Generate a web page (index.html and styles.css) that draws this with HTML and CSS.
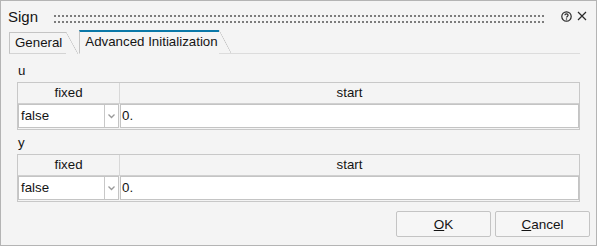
FILE: index.html
```html
<!DOCTYPE html>
<html lang="en">
<head>
    <meta charset="UTF-8">
    <title>Sign</title>
    <link rel="stylesheet" href="styles.css">
</head>
<body>
    <div class="dialog">
        <div class="titlebar">
            <span class="title">Sign</span>
            <span class="grip"></span>
            <svg class="icon" width="11" height="11" viewBox="0 0 11 11">
                <circle cx="5.5" cy="5.5" r="4.7" fill="none" stroke="#2a2a2a" stroke-width="1.2"/>
                <path d="M3.9 4.3 C3.9 2.5 7.1 2.5 7.1 4.3 C7.1 5.4 5.5 5.4 5.5 6.6" fill="none" stroke="#2a2a2a" stroke-width="1.2"/>
                <rect x="4.9" y="7.4" width="1.2" height="1.2" fill="#2a2a2a"/>
            </svg>
            <svg class="icon" width="10" height="10" viewBox="0 0 10 10">
                <path d="M1 1 L9 9 M9 1 L1 9" stroke="#2a2a2a" stroke-width="1.2"/>
            </svg>
        </div>

        <div class="tabs">
            <div class="tab">General</div>
            <div class="tab active">Advanced Initialization</div>
            <div class="tab-rest"></div>
        </div>

        <div class="content">
            <div class="label">u</div>
            <div class="grid">
                <div class="head">fixed</div>
                <div class="head">start</div>
                <div class="select">
                    <span class="value">false</span>
                    <span class="arrow">
                        <svg width="7" height="5" viewBox="0 0 7 5"><path d="M0.5 0.5 L3.5 3.5 L6.5 0.5" fill="none" stroke="#9a9a9a" stroke-width="1.3"/></svg>
                    </span>
                </div>
                <div class="input">0.</div>
            </div>

            <div class="label">y</div>
            <div class="grid">
                <div class="head">fixed</div>
                <div class="head">start</div>
                <div class="select">
                    <span class="value">false</span>
                    <span class="arrow">
                        <svg width="7" height="5" viewBox="0 0 7 5"><path d="M0.5 0.5 L3.5 3.5 L6.5 0.5" fill="none" stroke="#9a9a9a" stroke-width="1.3"/></svg>
                    </span>
                </div>
                <div class="input">0.</div>
            </div>
        </div>

        <div class="buttons">
            <button><u>O</u>K</button>
            <button><u>C</u>ancel</button>
        </div>
    </div>
</body>
</html>
```

FILE: styles.css
```css
body {
    margin: 0;
    font-family: "Liberation Sans", Arial, sans-serif;
    font-size: 13.3px;
    color: #141414;
    background: #f4f4f4;
}

.dialog {
    width: 597px;
    height: 246px;
    box-sizing: border-box;
    border: 1px solid #b4b4b4;
    background: #f4f4f4;
    display: flex;
    flex-direction: column;
}

.titlebar {
    height: 30px;
    display: flex;
    align-items: center;
    padding: 0 9px 0 7px;
}

.title {
    font-size: 15px;
    margin-right: 14px;
}

.grip {
    flex: 1;
    align-self: flex-start;
    height: 8px;
    margin: 14px 12px 0 0;
    background-image: conic-gradient(from 90deg at 2px 2px, transparent 75%, #7c7c7c 0);
    background-size: 4px 6px;
}

.icon {
    margin-left: 5px;
}

.tabs {
    display: flex;
    align-items: flex-end;
    height: 23px;
    padding-left: 8px;
}

.tab {
    position: relative;
    height: 20px;
    line-height: 20px;
    padding: 0 4px 0 5px;
    border-left: 1px solid #c4c4c4;
    border-top: 1px solid #c4c4c4;
    border-bottom: 1px solid #d4d4d4;
    margin-right: 13px;
}

.tab::after {
    content: "";
    position: absolute;
    top: -1px;
    right: -12px;
    width: 12px;
    height: 22px;
    background: linear-gradient(to top right, transparent calc(50% - 0.6px), #c4c4c4 50%, transparent calc(50% + 0.6px));
}

.tab.active {
    height: 21px;
    border-top: 2px solid #0a78a8;
    border-bottom-color: transparent;
    padding-right: 1px;
}

.tab.active::after {
    top: -2px;
    height: 23px;
}

.tab-rest {
    flex: 1;
    margin-left: -13px;
    margin-right: 16px;
    border-bottom: 1px solid #dcdcdc;
}

.content {
    flex: 1;
    padding: 10px 16px 0 16px;
}

.label {
    height: 18px;
    line-height: 14px;
    padding-left: 1px;
}

.grid {
    display: grid;
    grid-template-columns: 102px 1fr;
    border: 1px solid #c8c8c8;
    padding-bottom: 1px;
    margin-bottom: 6px;
}

.head {
    height: 20px;
    line-height: 20px;
    text-align: center;
    border-bottom: 1px solid #d0d0d0;
}

.head:first-child {
    border-right: 1px solid #d8d8d8;
}

.select,
.input {
    height: 22px;
    line-height: 22px;
    background: #fff;
    border: 1px solid #c4c4c4;
}

.select {
    display: flex;
    margin-right: 1px;
}

.value {
    flex: 1;
    padding-left: 2px;
}

.arrow {
    width: 13px;
    border-left: 1px solid #c8c8c8;
    display: flex;
    align-items: center;
    justify-content: center;
}

.input {
    padding-left: 1px;
}

.buttons {
    display: flex;
    justify-content: flex-end;
    gap: 4px;
    padding: 0 6px 8px 0;
}

button {
    width: 95px;
    height: 26px;
    font-family: inherit;
    font-size: 13.5px;
    color: #141414;
    background: #f6f6f6;
    border: 1px solid #c4c4c4;
    border-radius: 2px;
}
```
